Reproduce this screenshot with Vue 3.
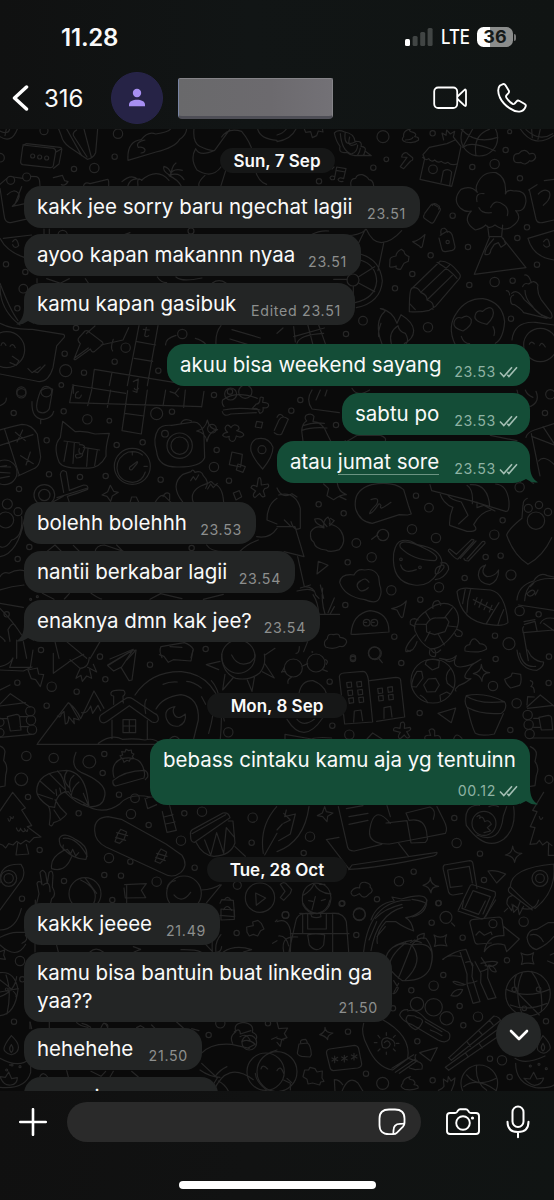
<script setup>
// each group is one day, every block is a run of messages from the same person
const days = [
    {
        label: 'Sun, 7 Sep', pill: 115, top: 18.5, bottom: 12.7,
        blocks: [
            { from: 'them', messages: [
                { text: 'kakk jee sorry baru ngechat lagii', time: '23.51', width: 396 },
                { text: 'ayoo kapan makannn nyaa', time: '23.51', width: 337 },
                { text: 'kamu kapan gasibuk', time: '23.51', width: 331, edited: true },
            ]},
            { from: 'me', messages: [
                { text: 'akuu bisa weekend sayang', time: '23.53', width: 363 },
                { text: 'sabtu po', time: '23.53', width: 188 },
                { text: 'atau ', link: 'jumat sore', time: '23.53', width: 253 },
            ]},
            { from: 'them', messages: [
                { text: 'bolehh bolehhh', time: '23.53', width: 232 },
                { text: 'nantii berkabar lagii', time: '23.54', width: 271 },
                { text: 'enaknya dmn kak jee?', time: '23.54', width: 296 },
            ]},
        ],
    },
    {
        label: 'Mon, 8 Sep', pill: 140, top: 51.3, bottom: 20.5,
        blocks: [
            { from: 'me', messages: [
                { text: 'bebass cintaku kamu aja yg tentuinn', time: '00.12', width: 380, shape: 'below' },
            ]},
        ],
    },
    {
        label: 'Tue, 28 Oct', pill: 140, top: 51.3, bottom: 20.8,
        blocks: [
            { from: 'them', open: true, messages: [
                { text: 'kakkk jeeee', time: '21.49', width: 196 },
                { text: 'kamu bisa bantuin buat linkedin ga', more: 'yaa??', time: '21.50', width: 368, shape: 'multi' },
                { text: 'hehehehe', time: '21.50', width: 178 },
                { text: 'sama i', time: '21.50', width: 194 },
            ]},
        ],
    },
]

// wallpaper doodles: c = circles (x, y, r), p = outlines
const doodles = [
    { x: 0, y: 125, c: [[354,26,14],[283,129,14],[222,132,8],[344,95,8],[0,98,13],[98,93,6],[119,96,6],[140,99,6],[132,17,12],[18,418,8],[70,491,13],[76,441,8],[188,330,14],[573,318,9],[377,668,14],[344,710,8],[194,686,8],[252,743,8],[197,737,18],[475,737,8],[228,609,8],[64,800,14],[139,800,16],[184,780,7],[20,674,54],[547,627,14],[32,166,12],[80,156,12],[690,800,8],[52,550,8]], p: [
        'M68 60l92 10q8 2 7 10l-7 42q-2 7-10 6l-82-9q-7-2-6-9l6-44q2-7 8-6M70 60l10-4 100 11q7 2 5 9l-8 41-16 13M167 82l17-10',
        'M0 35q35 22 52-23M0 18q25 12 29-6M15 32l4-20',
        'M176 12l8 20q4 20 24 34l54 37q18-4 25-20l6-71M200 12l45 80M230 15q-14 8-9 18l40 63M252 12l22 84',
        'M384 106q-4-57 40-62 20-26 43-17 38-5 45-15M384 106l84-25q57-14 71-38 19-12 21-31M435 45q-30 6-20 22 15-2 20 7 1 9-12 10',
        'M366 170q28-26 49-6M383 184q8-28 38-21M414 181q-4-28 12-15M424 166q48-40 83 0M552 164q-15-24-43-13 10-23 38-15M512 154q3-31 16-40M508 150q-22-13-16-26 16 5 20 19M544 184q-10-20-37-32',
        'M582 12q-4 40 17 52 30 15 45 12-46 20-57-5-18 31 4 64 45 28 72-9M644 76l45-62M665 36q20-30 60-17 26 31 34 65M615 151q-22 20-18 32M678 134l-15 48M773 12q8 30 58 34M765 133q10 38 35 45',
        'M0 178l20-17M40 156l28 4M92 154l17 1q9 2 10 15l1 14M0 190l12 79q2 26 20 24l54-12M22 209q20-20 34-4 7 17-19 39l38-8M65 185l-22 57',
        'M160 158l27-7 7 16 10 3q-8 14-20 9M250 184q4-15 20-8l53-13q4 0 3 21M0 340q20 40 73 57M10 340l85-10M38 350q12-18 18 12-12 12-18-3M148 312v20M132 312v20M365 332l25-9M518 334q30-11 57 0M472 456q12 18 28 17M528 456q16 16 78 3M637 474q20-14 41 0M111 473v-12M140 461l42 14M208 461l-27 14M256 461l9 13',
        'M0 485q0 70 60 115M0 475q30 80 54 112M0 595q38 20 97 18l93 15q6 4 2 10l-22 25-11 65q-15 50-51 40L0 747M37 694l20 13-8 14-19-8M3 661q5-16 15 0M30 664q8-12 16 4M84 731l12 12 25-17M101 739l12 4 22-23',
        'M223 700l18-44q-11-11-4-18l18-20q8-4 15 5l37 28q5 7-3 11l-21 18q-7 4-12-8l-45 32q-6 0-3-4M285 603l-26 23M303 660l66-15 17-37M340 643q-10 26-2 35M223 700l42-31',
        'M417 602l-35 180M474 602l-32 180M411 650l56 10M403 700l55 9M283 733l280 46M336 742l-8 40M283 733l-8 60M217 780l160 25M220 780v25M400 770l15-8-4 40-12-4M430 613l18 2M439 607l-5 25q4 6 12 0',
        'M497 660q-2-19 31-29M586 640q20 5 32 18M648 658q-2-36 15-56M696 614l85 25M690 642l52 16',
    ]},
    { x: 277, y: 125, c: [[318,35,18],[289,128,8],[328,103,7],[467,25,8],[686,75,8],[653,117,14],[586,126,8],[729,160,8],[468,133,13],[527,272,8],[126,169,8],[750,307,8],[721,339,8],[573,366,8],[461,391,8],[406,447,8],[354,490,8],[577,480,8],[653,471,14],[707,467,8],[780,419,8],[453,607,14],[258,587,13],[207,627,8],[702,581,8],[228,465,18],[512,351,5],[607,38,55],[790,660,50],[698,20,6]], p: [
        'M587 12l-30 55M552 12q45 48 110 25M597 92q-10-62 40-79M560 66q24-20 95 12M730 12q40 60 99 20M747 14q40 38 80 12M764 12l2 26M790 12l-7 31',
        'M172 24q10-12 31-3 28 4 31 28 23-2 18 15 17 2 12 14l19 14-27-1-22 1q-15-1-25-10-25 5-20-18-12-15-17-40M190 26q4 50 32 61M205 21q-8 50 34 28M218 36q-10 36 21 20M225 86q16-4 17-26M242 90q7-10 8-21M260 91l4-13',
        'M400 12q-7 8 9 10 12 4 4 13 15 1 11 11-12 10-38 5-16-6-6-16-3-18 20-23M385 45q20 0 23-8',
        'M0 50q42-7 57-38M0 30q18-4 28-18M82 12l4 10 15-2 5 18 13-6 5-14 14 3-2-11M165 132l6-6M173 155q-11-5-14 3 2 9 13 5l7-37 28 5-7 30q-13-6-17 3 3 8 15 5M177 136l28 5',
        'M222 183q-4-23 14-23 4-13 20-11 15 5 20 15 12 1 14 18M376 89q11-12 18-1l13 10q2 9-6 10l-21 23-10-6 20-28-16-1z',
        'M500 45l-5-21 12 7 2-16 11 12 13-8-4 17 23 28-12 58-16 62-95-21 14-62-5-12 19-22 53-11 24-11M437 97q10 11 18 4 8 12 18 4 10 11 20 4 10 10 20 3 10 11 27 5M492 172l7-34q16-9 25 3l-6 41',
        'M595 315q20-4 31-15 10 14 28 0 31 23 54 2 30-22 8-45 26 6 31-28 0-34-36-31-20-6-26 9 6-48-28-64-42-5-58 38-4 12 2 21-19-22-49-9-27 31-2 56 15 14 33 9-29 31 12 57M600 230q-6-28 21-24M606 248q8 18 37 15M641 247q13-28 40-7 16 11 10 32M632 303l4 31 38 1 3-35M638 335l-46 113 155-20-72-91M650 342q-28 30-26 46 16 5 18-14l10-16 12-5 8 14 14-10-7-17',
        'M710 98q1-13 15-12 18-20 32 1 18-7 19 11-8 14-18 9-12 17-27 5-23 5-21-14M755 195l25-16M802 167l29-4M757 194l20 88q4 15 23 10l31-7M784 207q19-19 33-6 8 18-18 40M753 340q15 56 78 65M753 340l78-23M800 350q14-20 18 12-11 10-18-2',
        'M443 265l18-24q5-6 12-1l12 7q9 4 3 12l-16 30q-5 9-13 3l-14-10q-9-5-3-13M466 242q3-11 16-2 10 4 3 12M407 350q16-1 37-22l-8 36q-3 8-8 0zM490 331l20-12q14 0 17 16l7 30q0 8-8 11l-20 4q-10 1-12-9l-8-32M493 330q-6-22 10-20 8 5 8 12',
        'M339 404q0-8 18-11 1-12 16-20l8 6q0 10 15 16l-2 14-13 6-10 18q-18 0-13-10-14 6-20 2z',
        'M397 560q0-62 6-68l87-84q30 1 55 35 9 9 2 18l-70 82-20 13q-30 7-60 4M403 490q18-7 28 12 21 8 19 23 24 6 18 28M431 502l88-83M450 525l76-74M480 412q40 24 60 48M397 535l18 19',
        'M180 330q60 8 88-17 18 40 45 40 30-1 61-36M265 313l-22 45M320 355l-17 82M250 387q60 17 66 81-5 65-78 80M250 405q48 15 49 64-5 51-65 64M170 463h40M245 455l48-30M246 475l47 25M229 484v48M100 330q30-15 55-12',
        'M315 657q-26-66 9-98-2-9-14-8 37 7 50 44l12-26q37 22 38 48 0 23-28 39M343 656q-10-34 20-54 3 18 22 23 12 20 3 30M312 595q-10 28-7 40',
        'M534 657q-25-53 6-95 28-42 78-41 58 10 65 69-4 52-28 65M558 618q-31-9-27-25 4-20 23-14 19-13 29 5 3 18-25 34M630 598q-40-9-36-25 4-20 23-14 19-18 30-6 9 21-17 45M553 634q7 22 25 22M648 605q8 14 3 27',
        'M743 450q12-3 20 23M737 485q5-13 18-8 17-16 28 3-4 20 9 43l30 39q8 18-3 18-40-12-54-38-21-21-21-46M698 510q-1-13-10-13M704 505q17-16 38 19l52 47M701 520q-2 21 12 19 20 12 27 24l70 17M703 535q-7-21 7-25M705 645q6-57 71-53l55 8M757 658q6-13 15-1M788 662q6-16 17 4',
        'M50 605l5 46M92 598l15 58M125 600l20 56M50 635l92-26M0 625l18-16M60 655q7-26 80-30',
    ]},
    { x: 0, y: 390, c: [[64,10,14],[41,69,8],[191,64,8],[262,88,14],[328,92,7],[470,71,18],[516,65,8],[642,15,8],[636,116,13],[428,157,8],[350,165,8],[140,151,8],[650,180,8],[642,231,14],[687,272,8],[482,269,8],[317,258,8],[240,261,8],[147,253,8],[57,297,8],[786,179,12],[397,229,54],[539,167,38],[539,167,26],[495,131,10],[133,315,31],[133,315,17],[14,247,37],[22,342,15],[54,365,12],[17,390,24],[53,507,8],[88,471,8],[20,673,8],[92,628,3],[112,620,3],[123,780,8],[300,800,8],[617,777,8],[692,12,18],[736,5,20],[575,474,8],[715,800,50]], p: [
        'M0 47q20-7 19-23M122 2q-20 50-7 63 21 10 33-9l10-58q-16-11-36 4M96 35q-2 53 35 53 26-5 30-24M122 88v13',
        'M210 38l395 12M218-10l-9 48M275 0l-12 47M332 0l-10 52M442 0l-18 132-58-10 17-120M497 0l-8 48M556 0l-5 52M612 4l-7 47M374 70l58 8M235 5q-11 2-8 18 15 5 17-8M415-5q-7 10-12 0M510 5l15 5 12-15M525 10l10 10',
        'M0 120q40-12 66-17 30 0 46 30l10 68q-4 28-18 34l-50 23M0 166l46-15 53-17M14 118l44 138M0 230l20-3M46 127l30 25M68 120l-17 36M62 197l38 24M91 186l-13 39M0 230l32 1M0 247l30 2M-2 265l30-6',
        'M188 94l38 31q32-3 59 7l43-2q-12 41-10 69-20 38-57 35-70 4-83-16-21-50 3-75zM192 153l47 6M250 172l49 8M202 158l-10 56M223 160l-4 60M264 177l-4 52M292 180l-8 46M239 164q20 0 14 14l-6 14q-14 0-9-16M239 192q-20 1-9 12 13 0 18-9',
        'M436 246q-10 31-38 31-44-3-47-43 0-34 34-48 26-5 42 9M389 232l22-17q4 1-1 7l-14 17q-10 2-7-7M397 185v10M442 229h-10',
        'M475 118q10-14 40-12l66-10q24 0 31 40l2 67q-12 28-78 28-62 2-66-46-13-40 5-67M543 99q9-17 32-6M622 90q7 29 31 29-26 5-32 36-4-27-31-32 27-6 32-33',
        'M672 50q-8-9-4-20 40-29 104-5M670 60q44-10 110 0M667 65q4 17 25 7l77-4M769 42q10 0 11-14-1-10 10-5l-2 14q18 0 18 9-2 10-17 7 3 15-9 17l-9-14-14-1zM677 110q6-11 16 3 8-14 22-4 6 9-5 13 23 5 21 14-8 9-22 2-4 20-16 15-8-4-5-14-12 6-20-3 3-8 15-9-11-9-6-17M770 94l18 3-4 17-18-3zM696 186l31 7-5 38-34-7zM714 222l22 8-7 17-20-7zM700 309l18-7 7 18-17 10z',
        'M788 237q-27-29-35-54-4-26 15-36 38-9 51 25 0 28-31 65M775 265q6-6 8 6l1 14 20-3q7 10-10 14l-4 7 5 15q-8 8-16-8l-14 13q-11-6 2-20l-14-10q4-12 18-3zM331 286l10 18 14 3-18 11-5 16-11-15-15-4 17-10z',
        'M191 307l-10-54q4-18 18-7l9 55 43-16q16 0 12 13-30 12-61 21l6 18M171 323l92-29M160 335l30-16M390 338l5-17 14 0 8 17M465 338q15-27 27-21l22 21M489 320q8-17 20-8v17',
        'M548 336q-40-51 1-83l24-8q5-10 12 2 20-7 25 10 20 20 7 38M580 337q-13-32 27-51l21-8q4-8 13 4 27 5 30 55M572 272l8-12 7 10 9-15M623 297l9-15 8 11 12-13',
        'M0 470q17 8 35-20 35-10 30-70M0 500q54-10 73-112M0 560q10-17 27-10 25-14 49-7M0 600q35-12 72-15M0 640l70 12M0 655q40 40 65 80M30 754l-6-35q14-26 22-12M50 750v55M70 755l10 50M0 739q20 16 14 15',
        'M775 450q-36 13-57 36M831 325q-30 20-30 65l30 12M770 440q40 7 61-25M140 485l25-20 20 20M220 466l20 20M285 486q3-20 28-21l60 20M620 465q12 20 52 20M127 610l35 18M193 627l15-16M273 610q27 18 32 17M450 628l32-17 64 15M610 628l60-15M350 465l20 20',
        'M165 755l12 50M200 755l60 50M300 755l-29 50M408 780l-28 30M400 778l-70 29M483 770l70-12q20 7 27 20l-7 25M483 770q-7 13 3 33M510 770l36 2',
    ]},
    { x: 277, y: 390, c: [[70,30,8],[43,62,8],[177,105,8],[456,353,13],[417,317,8],[200,370,8],[125,343,8],[405,418,14],[318,435,17],[238,459,13],[477,444,14],[284,502,14],[343,601,14],[212,517,8],[652,434,14],[677,391,8],[671,497,8],[626,501,8],[702,555,15],[563,564,8],[486,592,14],[430,629,8],[205,645,8],[728,663,14],[785,673,8],[352,740,8],[292,789,18],[654,737,8],[696,761,18],[228,803,8],[816,800,8],[754,355,12],[786,345,11],[813,366,11],[777,392,26],[728,292,14],[820,13,14],[804,69,8],[269,698,10],[292,698,10],[372,508,4],[429,532,4]], p: [
        'M105 0q-20 30 0 57l82 11M130 0l-13 30M150 0l-6 18M225-5q15 28 53 5M720 0q10 47 42 49 28-15 15-45M745 0q5 15 23 22',
        'M78 153l-4-31q2-23 15-29-8-8-2-17 17-9 24 3l-3 16q28 1 41 34l12 24M78 107q30-11 64-7M75 121q30-11 75-7M-8 121l14-31q10-17 28-2l-20 44q-9 6-22-4M0 82q8-17 20-1M205 152q-7 10 16-4l20-12 70 0q18 7 14 16M640 136l80 16',
        'M747 142q4-15 25-22l59-19M763 131l26 127M831 165l-67-26M770 280q-12-5-10-17M798 110l33 50M785 213q15-20 46 10',
        'M0 294q15 35 45 17l15 10M5 315q50-13 65 40v60q-20 10-28-20M0 410h54l27 90-60-15M22 390l20 20M62 500l20 90q30 0 34 25l10 10M140 282l15 14-5 21 20 12q20-15 38-15-24-10-27-34M188 320l19 9',
        'M284 284q65-12 96 15l15 50 8 23-11 3-25-1-81 26q-37-4-50-43-10-57 48-73M282 329q28-10 17 14-21 20-21 28 10-3 24-24 4-10 10-1-9 20 30-9',
        'M101 426q13-23 40-12-4-23 12-33 10 14 4 21 23 4 34 20 20 32-4 57-28 10-40 1-32-1-37-24-12-7-9-30M140 410q-26-8-27-23 18-5 25 9l12 14M158 407l14-15-12-7M284 448l17-13M305 424q-10 14 0 17M120 552l4-38 29 12z',
        'M350 490q7-35 25-38 20-5 46 12 72 12 74 55l-13 30q-26 42-70 36-70-8-62-95M374 458q18-9 74 20 45 22 26 34-67-1-104-40-4-10 4-14M490 519q25-5 25 19-14 29-40 31M485 530q20-11 15 4-15 21-25 17-2-17 10-21M371 525q9 29 47 14',
        'M459 284l5 18 116 30 106 32q12 3 10-30-6-50-40-52M488 307q9 34 40 45-12 26-10 54l52 18q40 2 20-20 20-38 52-44M570 286q20 13 16 55M580 284q53-3 58 64M513 316q9 13 40 20l20 40-28 26M600 336l0 17 20-7 34 17',
        'M514 483q1-9 8-3l16 13 46-45q12 0 4 8l-45 51q-7 3-29-24M570 507l46-52q9-3 8 5l-50 53q-13 0-13-8M550 505l47-52M738 345l-3 40q-40 32-46 50 20 59 64 88 45-25 71-80M739 345q-2-13 12-20',
        'M188 577q4-27 43-22 10-20 32-15 30-7 42 20l3 25q9 20-1 40-9 19-44 4-62-10-75-52M276 577q-9-17-24-5-22 12-2 30 14 3 24-9M626 525q-18 24 4 35 24 0 35-20 0 34-27 44-32-4-34-29 1-25 22-30',
        'M540 605q8-12 36-10l65 5q44 9 52 98-14 12-52 6-90-7-101-99M565 597q-4 20-8 44M581 597q-11 35-11 70M666 638q-20 32-38 63M680 659q-12 25-17 45M589 629l58 30M600 623l-7 21M615 628l-9 24M631 637l-10 22M645 646l-8 20',
        'M344 656q30-5 44-23l-10 48q-4 5-10-5l-8-16zM222 732q4-60 57-70 57 5 57 64l-100 7q-14 1-14-1M262 697h7M285 697h7',
        'M414 722q-8-30 35-60 45-34 76-15 30 25 14 70-37 59-78 60-30-14-47-55M448 703q12-20 29-19l30-1 9 13-12 29-31 9-24-8zM448 703l-34-1M459 725l-15 28M484 733l18 32M515 708l26 3M503 683l23-29M460 690l-14-23M468 655q-4-24 16-23 10 12 7 14M414 710l-14-7q-3-17 13-17l11 4M420 755q-10 33-33 30-6-14 28-50M459 778q-7 23 15 22 6-13-3-24M540 718q23 7 13 20-17 5-19-7',
        'M720 630q3-43 50-57 18-28 41-16l20 4M725 645l106 16M743 632q4-72 88-66M750 611q20-20 24-2-17 18-24 2M740 710q-6 6 0 20l14 82M742 703l32-9 6 27M738 728l93-8M741 695l33-6M800 700l31 22M790 700q10-20 41-15M760 590l10-10M775 615l8-15',
        'M130 585l10 40M108 614q16 24 17 58M137 594q-5 40 7 78M172 624l-19 44M172 650l-13 23M115 673h73M70 594l30-9M60 603q38-10 50 0M57 790q10 0 10-20M146 771q-10-15 5-25 1-17 18-12 18-6 20 8 20 2 20 14-7 18-20 13-20 11-43 2M564 783q-4-17 14-19 5-20 17-17 10 8 13 14 20 1 21 16-20 14-65 6M80 785l12-30',
    ]},
    { x: 0, y: 650, c: [[155,110,14],[52,98,8],[230,125,8],[140,167,8],[316,88,8],[450,44,8],[79,318,14],[161,324,14],[268,335,19],[313,312,8],[308,369,8],[64,388,19],[84,441,8],[357,434,8],[236,490,8],[393,492,14],[446,525,8],[405,445,13],[543,572,14],[553,490,8],[606,485,14],[758,503,14],[755,578,8],[584,653,8],[327,624,14],[391,635,8],[119,600,8],[192,693,8],[363,677,8],[313,675,8],[337,750,8],[470,695,14],[66,746,8],[26,685,24],[26,685,14],[91,184,14],[93,211,14],[96,239,14],[685,247,14],[780,743,44],[255,731,48],[712,706,12],[552,730,52],[0,217,12],[0,248,12]], p: [
        'M0 50q30-7 39-26l-10 28 62 0 8-52M0 60l70 3 26-12M84 60l28-6 4 18 15 2-10 36-14-21-13-3zM160 10v60l46-33M206 36l45-23M210 29l30 26q26 0 28-33M240 57q-10 20-12 28l15-9 4 18 13-16 15 7-6-26M263 52l27 14-10-23',
        'M323 45l75-45 10 2-12 88-9 2-24-40-22 11-18-16 75-46-35 53M478 14l14 5 13 18 15-8 53 4 6-33M665 12q0 55 42 73 42 8 72-16 20-24 14-57M695 15q18 38 55 23 20-16 14-25M660 34l-41 10 37 15M675 73l-7 47 31-36M742 90l14 34 8-46M787 65l36 19-28-42M795 15l30-20',
        'M0 120l30-15M0 162l31-31 59 40M0 168l76-10M0 262l95-9M22 200l28-7q8 0 9 9l4 38-32 3zM0 206h22M60 200h22M60 230h24',
        'M111 283h355M113 280l92-122q25 18 37 48l40-83 30 52M172 198q10 7 12-6l8-8 4 38q11-2 10-22l17 21-2-16 17 5-29-50M245 188q15 5 27-20l6 22 16-24 8 16M295 280q40-30 72-12 40-3 68 2 26-8 50 13M304 194q-9 8-3 20 9 9 21 0l66-47 68 49q15 5 19-7 0-15-10-18l-66-44q-13-8-24 0zM336 210v56M442 212v54M369 209h38v39h-38zM388 209v39M369 228h38M341 163v-25q-10 0-8-10 5-10 38-7 9 9-2 18l1 20',
        'M405 135q48-72 140-70 108 10 128 148M468 177q20-36 75-43 56 9 52 76l-14 57M634 92q40 42 27 175M525 170q-36 6-25 38 10 25 37 20 23-10 19-36-24 21-34 0-6-13 3-22M489 103q20-9 43-7M560 94q20 0 44 20M640 158q4 30-14 92M605 140l12 23M437 190q-6-32 2-42M510 266q17-15 28 2',
        'M0 288q14 5 15 17l-4 27q15 15 6 43l-2 33-15 3M228 307q-19 43 15 60 84 34 70 75-5 31-50 28-35-9-69-45M250 463q60 36 110-2 30-33 90-20',
        'M110 425q0-60 90-64 50 5 62 75l5 32q-30-20-50-26l-12-17q-35 0-41 47l-18-3q-35-24-36-44M147 370l48 48M172 363q20 13 26 65M202 363q-20 25 6 50M222 376q-20 15-10 49M237 396q-20 15-23 40M120 393l43 38M113 432l45 15M168 418l2 18M179 414l4 16M250 430l15 35M145 468q10 15 3 56 8 9 13-6 26-8 39-26-21-18-35-43M162 480l20 30',
        'M342 382q-12-40 22-56 65-14 70 48l-2 10-85 24q-10-2-8-16 35-30 95-31 12 6 9 20l-7 8M365 325l-5-8 8-2-3-10 10 1 3-8 8 4 8-2 1 9 7 3-5 7 4 7-10 1-3 7-7-3-9 6-3-8z',
        'M38 427l-39 57M38 427l38 47-11 6 30 47-13 3 41 31-21 2-14 14-10-6-16 11-12-8-11 11-13-4-9 13-8-8-20-8M24 506q4 16 8 0M30 500q10 10 10 0M49 534q7 17 12 4M61 535q9 17 15 5M73 536q9 15 10 3M53 579l-5 36 38-3-7-29',
        'M284 542q-2-39 40-42l40 8 134 74 48 34q20 29-4 52-24 19-53 2L318 591q-33-17-34-49M353 552l9-14 18 8-8 22-13 12-14-5zM347 562l30 9M350 548l33 9M474 611l9-14 17 9-8 22-12 12-15-6zM467 622l29 10M470 610l31 9M435 445l8 31 27-12M440 445q15-10 48 5M487 485l14 62 28-6-20-74M492 501l27-7M497 522l28-6',
        'M572 557q-4-15 11-21l86-47q17-3 21 14L584 577q-13 1-12-20M576 551l101-57M588 577q20 40 54 42 50-2 63-40l-6-66-14 0M614 570l18 46 18-68 21 62 8-77 25 30M705 590l31 29M790 610q-13-80 40-140M831 550l-37 65',
        'M178 566q10-23 50 3 42 22 30 59-37 1-70-34-11-9-10-28M190 565q40-5 72 54M190 585q-5 23 12 13l10 13 6-13 9 20 9-10M190 602q-41 22-35 54 41 14 60-36M0 698q-4-59 63-55 15 20 4 45L0 780M110 760l7-28-6-32q3-8 12-4l3 8-6-36q8-15 17 2l5 30 5-32q10-12 12 8l-2 35q14 24-2 35l-5 22M130 705q20-18 20 20M242 690q60 28 38 73M255 684l35 46M374 704l65-3-15 20 13 22-61 1-4-30M380 760v-53M501 715q4-20 25-23M605 720q34-2 55-16M664 705l-44 53M660 760l5-11 35 2 4 49-44-4M673 750q9-16 20 0M767 729l30 15-28 22zM522 735q24 28 50-8',
    ]},
    { x: 277, y: 650, c: [[49,54,27],[117,39,27],[228,27,8],[158,95,8],[294,10,19],[373,39,8],[656,27,8],[648,108,14],[719,160,14],[815,99,8],[428,189,8],[166,227,8],[217,254,14],[700,240,8],[468,93,66],[752,195,14],[755,224,14],[758,252,14],[532,504,8],[539,579,14],[99,560,14],[80,609,8],[609,611,8],[410,665,8],[366,694,14],[621,690,8],[300,748,8],[196,760,8],[247,792,18],[484,760,8],[789,685,24],[789,685,13],[621,520,36],[25,795,10],[106,6,1],[816,388,12]], p: [
        'M75 49l17-8M22 53l-8 14M14 65h12M43 82q-13 6-10 18M137 59l14 5M145 29q11 4 3 14M307 27l9 11M390 0q10 7 12 0M463 0q10 18 28 0',
        'M448 32q17-7 39 0l-2 20-19 8-21-17zM440 105l14-18 22-2 11 20-12 20-25 1zM404 110q0-22 16-46l14 0 4 20-20 27zM521 55q-20 20-10 45l19 15M430 136q13 6 22 22M491 152l-2-16 20-10 12 7M488 25q33 10 50-8-16 32 12 34 33-2 62-23-31 17-35 28-29 34 5 30-20 15-37 21-15 12-8 16M500 28q20 15 36-3',
        'M203 222l-16-142q1-10 14-11l57-5q12 0 16 24l13 128-84 6M278 92l78-10q16 0 15 10l12 109-84 13M209 98l14-2 1 15-13 2zM239 96l14-2 1 15-13 2zM212 122l14-2 1 15-13 2zM242 120l14-2 1 15-13 2zM215 145l14-2 1 15-13 2zM245 143l14-2 1 15-13 2zM302 116l14-2 1 15-13 2zM332 112l14-2 1 15-13 2zM304 138l14-2 1 15-13 2zM334 135l14-2 1 15-13 2zM230 216l2-33 20-3 5 32M321 205v-32l20-4 4 32',
        'M66 130q7-39 42-38 33 13 40 38M30 208q50 80 107-4M60 208q20 24 52 0M483 190l53-16-13 44zM613 43q2 24 25 25-23 0-23 26-5-20-26-23 25-7 24-28M683 88l19-9 4-10 25 4q4 24-3 33l-27 8q-14-11-18-26M760 92q14 4 2 18 10-1 10 17M720 0q7 60 60 61 20-10 20-25-20 0-38-18l-10-18M728 9q10 45 48 40',
        'M568 137q55-12 114 18 9 10 0 27l-9 8q-62 5-103-18-10-17-2-35M568 138q37 26 114 17M572 175q11 51 23 75 16 10 57 2l27-61M750 171l40-36 41 33M752 175l77-9M765 264h66M786 202l28-6q10 1 10 10l3 33-34 1zM770 205h15M770 232h20M750 165l2-25 20 1',
        'M371 219q10-7 12 4l-1 12 17-3q7 8-10 13l9 15q-7 10-16-5l-13 12q-10-6 1-20l-20-5q-3-14 19-7zM444 267q-4-13 17-11l-5-15q10-9 17 1v16q15-5 18 7M270 267l17-18 28 18M24 267l0-14 80 14q18-7 60-3M530 267q7-23 25-2M760 290q20 9 18 25l-4 20q15 18 4 42l-4 30-14 2',
        'M96 470q-14 105-96 135M28 480l-5 20 32-8-15 60-35 20M20 490l20 20-20 10M0 540l16-18M143 470l5 15 20 4-16 10-2 16-13-15-16-3 15-8z',
        'M184 470l28 122q4 12 20 11l82-20M208 476l50-9M216 500l57-10M216 523l57-12M330 467l10 33M340 520q-50-60-62 20-6 44 60 42l80-15 87-17q9-14-5-40l-20-40M327 519l63-7 12 67 43-2q10-10 5-20-3-56-54-46l-9-22 72-18q20 8 10 37M148 569l38-7M149 570l68 88q90-4 243-38 22-3 20-13l-255 38-10 14M365 580l30 39',
        'M568 526q-10-63 40-60M600 555q70 30 79-57l10-28M710 470q9 65-30 98-55 38-112-42M600 500q12-10 8 5 10-10 15 10 13-8 20 8l-12 10 10 10-20 5M636 470q15-7 28 0M707 588q2 23 28 22-20 8-22 27-4-20-28-22 20-3 22-27M800 427l-33 54 13 4-20 45 14 3-15 50 20-2 8-10 10 14 13-10 15 12M815 580l-1 36h17M787 500q4 15 10 3M460 683q2 24 25 26-23 0-23 20-5-20-24-23 23-7 22-23',
        'M633 663q20-5 53 9l-27 27zM502 645l76-13q9 0 10 10l12 73M502 645q-5 4-3 14l16 68q4 9 14 8l28-5M512 660l65-11 9 50M512 661l8 51 35-4M590 705q-8-4-12 5l-34 70M590 705l63 20q3 0 2 12l-29 63M588 722l52 18-22 52M588 722l-24 51',
        'M700 710q0-56 130-68M830 642q10 80-55 133-10 1-75-65M700 710q-12 10 0 20l66 50M706 737q-18 3-16 25l14 20 5-17 13 10 8-21M223 725q10-15 25-11-2-19 17-17 19 5 14 14 15 12-4 22-14 18-28-2-20 15-25-3M10 703q13-10 20 1l14 15-4 11-20 21-10-8 14-19z',
        'M78 765q-10-50 30-65 50-5 54 44-3 43-43 47-28 0-41-26M80 735q26-16 31-35 12 30 51 32M127 703l17 0M95 752l12 2M133 752l12-4M115 740l-10 40M68 790l40 2M165 790h20M282 810q17-50 70-57l-7-12 29 6q69-20 75 3 2 40-44 51M295 805q26-29 80-42M405 748q40 6 44 15M682 785l10-10',
    ]},
    { x: 0, y: 900, c: [[60,183,14],[42,365,8],[20,268,4],[710,99,8],[626,405,8],[661,370,14],[20,510,3],[36,495,3],[60,500,3],[804,370,8],[797,515,56],[67,238,8],[748,428,22],[30,495,1]], p: [
        'M0 90q48 0 64-64M0 112q30-15 50-15l27 0M0 135q50 46 77-2M76 105q12 14-10 25M0 155l14-5-3 15 5 13-16-2M0 218q44-5 54 50-8 74-54 79M0 240q54 40 48 50M0 290q45-16 50-60M18 225q18 50 3 117M0 276l55-10M34 407q-30 38-19 47 20 20 36 1 14-20-17-48M34 434q-10 13 0 24 10-10 0-24M0 475q58 32 91 0M0 562q78 7 92-45l0-27M0 530l16 2 10-16 9 20 17-3q0 20-20 22-21 3-32-25',
        'M106 0v12M105 132v24M170 136l5 20M270 156q17-17 40 0M400 140l22 8-20 8M603 156q-17-8-60-7M617 133l20 21q-2-40 4-53M648 156q-4-30 15-52M665 140q-2 16-13 16M663 60v-33l40 3v28zM671 29q10-20 24 2M740 81l20-4-2-11 16-5 10 9 8 17-10 5-9 16-13-5-12 5-7-12zM670 156q35-23 85-7l-25 7M826 65l5-5M818 130l13-8M90 366l5 20M230 368q10 10 34 14M246 370q15 3 26 12M310 370q18 0 12 15M410 383l12-6 10 6M530 366l20 18',
        'M90 386v-20M148 366v20M303 383q10-26 20 0M465 385l-10-10M603 461q30-33 92-28l53 12M575 386l22 6M600 510q28 20 60 22M645 530q14-20 36-30M605 490l47 44-25 40M640 575q40-95 120-36M655 543q20 10 30 30M698 430q-11-22 10-35-10-24 22-28 34 4 27 30 17 7 12 20M703 395q18-13 18 7l32-10M720 410q20-12 30 10M726 425q20-10 40 8l-20 10M831 450l-20 7M815 418l16-7M783 507q5-17 20 0M766 520q2 27 34 50M119 531q10-20 24 0M200 512l5 19M273 514l30 15 14-15M340 514l-10 17M395 514l20 17',
    ]},
    { x: 277, y: 900, c: [[194,11,8],[247,44,18],[238,105,8],[464,68,8],[557,113,8],[740,65,14],[690,181,8],[507,52,18],[499,225,8],[470,257,14],[403,271,8],[485,9,8],[548,318,8],[559,376,8],[603,350,14],[421,424,8],[213,395,8],[267,521,8],[317,550,18],[467,541,8],[639,476,8],[675,481,14],[698,531,8],[807,364,8],[648,71,12],[420,312,20],[470,322,26],[509,355,20],[753,281,67],[712,268,7],[785,268,7],[742,325,7],[607,550,55],[26,45,10],[348,325,8],[760,498,3],[786,493,3],[808,506,3],[0,515,60]], p: [
        'M78 10q14 30 44 30 30-7 37-40M100 38l4 12q14 6 28 0l-2-12M36 155l20-90q4-24 30-25h84q30-2 38 25l7 90M92 43v44h56v-44M77 43v58h90v-57M167 101v54M167 101h49M40 101h37M92 105q23-7 51 0l-3 30q-20 28-43 0zM0 65q31-12 40 25 3 18 0 65M5 108q23-2 30 30M20 155q-10-50 42-44',
        'M260 155q17-155 140-155M282 152q20-110 95-130M276 120l23-55M301 130q-6-30 26-65 20 0 30 0 20 15 53 28-7-32-24-40 53-8 64-53M300 109l25-29M524 69l9 9M543 33l68 23q10 3 15-9l30-47M560 0l-5 25 50 18 20-40M705 12l5 25 13-13 4 20 13-25M735 25q40 10 50-25',
        'M579 70q-2-11 12-12l76-7q10 3 9 14l4 25M579 70l14 54q3 10 12 8l38-3M597 105l10-11 15 12 20-10 3 8M622 155q7-50 59-48l-2-28 48 38-38 38-6-20q-40-12-61 20M750 113q5-27 30-25l33-20 18 0M750 112q3 30 28 37 34-15 53-40M760 105q24-8 39 20M471 105q20 13 38-1-9 18 1 34-20-6-38 1 8-17-1-34M732 159q20 12 38-1-8 18 1 34-20-6-38 1 8-17-1-34',
        'M404 135q21-26 43-20 31 40 12 90-18 40-83 37-44-30-50-63 4-45 78-58M404 135q-30-10-52 5M404 135q40 50-20 106M404 135q-23 60-40 100M386 129q-53 40-50 82M404 135q80-15 56 67M400 128l13-8 20 8M424 118q-12-12 18-18 0 8-3 16M350 242l14 22q-7 18-16 17M365 250l-14 27',
        'M497 178q37-26 70-30l20 52-2 30 24 75-21 5-18-58 0-30-22-70M552 170q-40-8-53 8M566 187q20-7 22 10M570 250q16 0 30-7M613 173l20 30-1 30 25 60-24 5-22-50 1-28-18-35M610 215q13-3 20-8M612 190q34-10 50-3-10 17-38 10M635 195q5 24 23 20-5-15-20-20M522 287q10-22 35-18-10 25-33 18M560 252q-40-14-30-4 14 12 35 5',
        'M260 370q-10 30 12 70 27 62 75 70l45-34q13-70-80-120M345 505l65-41M355 517l60-40M367 520l54-38M395 475l25 9q21 5 15 23l-20 2-18-5M420 484q-10-12-3-20M322 428q10-13 18 4-6 18-23 10-10-26 13-29 28 8 23 25M328 398v8M303 406l6 8M292 428h8M303 453l6-6M328 463v-7M355 453l-6-6M366 430h-8M355 406l-6 6',
        'M368 345q4-17 24-16M368 345q10 20 35 28l80 47q24 12 34-3 6-20-10-24l-60-35q-30-35-55-25M393 346l20 2 8 5q18 3 15 14-9 20-21 22-20-10-28-30 1-8 6-13M445 365l50 30M460 390q20 7 35 17',
        'M516 473l135-125q12 0 20 13l-148 120M505 502l154-111M515 511l145-99M515 473q5 4 8 8M505 502l10 9M570 425l10 14M605 392l12 13M638 361l10 13M565 459l9 12M606 430l10 14',
        'M428 458l53-15-20 40zM144 382q1 18 24 17-18 7-16 20-8-12-24-15 17-6 16-22M149 462q-3-12 9-15l75-11q10 1 12 10l9 45q1 10-12 13l-73 8q-8 0-10-10zM173 468v20M165 474l17 8M182 472l-17 11M202 466v20M194 471l17 9M211 469l-17 12M231 460v20M223 465l17 9M240 465l-17 12M66 432l25-3q10 4 12 35l-4 7-25-2q-12-3-13-10zM71 429q-4-11 15-11 4 5 5 10M83 510l12 0 4-8 15 4 6 10 16-3-1 21 6 10-10 2-3 9-21-6-14 3-3-14-12-8z',
        'M174 574l-2-35q15 0 25 15M195 574q20-50 48-25l15 25M400 530q-10 8 8 10 10 8 3 14 15 1 12 11-18 7-40 3-17-8-6-17 0-15 23-21M484 571q11-3 17-12l-2-22 13 9 2-16 8 13 12-9-3 19-8 20M569 525q30 40 89 10M599 496q-6 50 30 75M560 560q40-30 98 12',
        'M736 218q-28 60 2 130M718 225q-15 30 10 60l59 60M688 268q60 30 130 0M700 315q50 20 110-5M763 214q39 50 30 120M714 475q30 21 90-7M716 490q0 60 60 73 40 3 55-8M741 535l18 2 11-20 10 20 20-3q-5 20-27 22-15-2-32-21M798 407q-24 35-14 45 17 16 34-3 8-13-20-42M798 430q-10 15 0 23 10-8 0-23M0 366l5 20 27-2-10 17 8 12-16 6-4 20-10-12M0 415l20 5M0 512q10-19 20 8M20 540l20 10 0 20M30 535l14 13M820 165l11-5M812 183l19 8',
    ]},
]
</script>

<template>
    <div class="phone">
        <header class="top">
            <div class="status">
                <span class="clock">11.28</span>
                <svg class="signal" width="28" height="18" viewBox="0 0 28 18">
                    <rect x="0" y="11" width="5" height="7" rx="1.5" fill="#fff" />
                    <rect x="7.6" y="8" width="5" height="10" rx="1.5" fill="#414544" />
                    <rect x="15.2" y="4" width="5" height="14" rx="1.5" fill="#414544" />
                    <rect x="22.6" y="0" width="5" height="18" rx="1.5" fill="#414544" />
                </svg>
                <svg class="lte" width="32" height="26" viewBox="0 -3 32 26">
                    <text x="0" y="17" textLength="29" lengthAdjust="spacingAndGlyphs">LTE</text>
                </svg>
                <div class="battery"><span>36</span></div>
                <i class="nub"></i>
            </div>
            <div class="nav">
                <svg class="back" width="17" height="26" viewBox="0 0 17 26">
                    <path d="M14.5 2L2.5 13l12 11" fill="none" stroke="#fff" stroke-width="3.5" stroke-linecap="round" stroke-linejoin="round" />
                </svg>
                <span class="unread">316</span>
                <div class="avatar">
                    <svg width="18" height="20" viewBox="0 0 18 20" fill="#a78ff2">
                        <circle cx="9" cy="5" r="4.2" />
                        <path d="M1 18.2v-1.6c0-3.4 4-4.9 8-4.9s8 1.5 8 4.9v1.6z" />
                    </svg>
                </div>
                <div class="name"></div>
                <svg class="video" width="36" height="24" viewBox="0 0 36 24" fill="none" stroke="#fff" stroke-width="1.8" stroke-linejoin="round">
                    <rect x="1.2" y="1.5" width="23" height="20.5" rx="4" />
                    <path d="M24.5 10.500l6.500-6.200q2-1.800 2 .5v13.900q0 2.300-2 .5l-6.500-6.200" />
                </svg>
                <svg class="call" width="30" height="30" viewBox="0 0 30 30" fill="none" stroke="#fff" stroke-width="1.9" stroke-linejoin="round">
                    <path d="M3 2.500L6 1.200q1.500-.5 2.500 1l3.200 5.300q.8 1.400-.3 2.700l-2 2.200q-.7.9-.1 2 2.700 4.200 6.300 6.500 1.100.5 2-.3l2-2.300q1.100-1.100 2.500-.5l5.600 3.200q1.600 1 .9 2.600-1.600 4.400-6.100 5-4.500.4-9.600-3.200Q6 21 2.900 14.500C.7 9.200.6 5 3 2.500z" />
                </svg>
            </div>
        </header>

        <main class="chat">
            <svg class="wallpaper" width="554" height="962" viewBox="0 129 554 962">
                <g v-for="tile in doodles" :key="tile.x + '-' + tile.y" :transform="`translate(${tile.x} ${tile.y}) scale(.3333)`">
                    <circle v-for="(dot, i) in tile.c" :key="'c' + i" :cx="dot[0]" :cy="dot[1]" :r="dot[2]" />
                    <path v-for="(line, i) in tile.p" :key="'p' + i" :d="line" />
                </g>
            </svg>

            <div class="thread">
                <section v-for="day in days" :key="day.label">
                    <div class="day" :style="{ width: day.pill + 'px', marginTop: day.top + 'px', marginBottom: day.bottom + 'px' }">{{ day.label }}</div>
                    <div v-for="(block, b) in day.blocks" :key="b" class="block" :class="[block.from, { open: block.open }]">
                        <div v-for="msg in block.messages" :key="msg.text" class="bubble" :class="msg.shape" :style="{ width: msg.width + 'px' }">
                            <span class="text">{{ msg.text }}<u v-if="msg.link">{{ msg.link }}</u></span>
                            <span v-if="msg.more" class="text">{{ msg.more }}</span>
                            <span class="meta">
                                <span><template v-if="msg.edited">Edited </template>{{ msg.time }}</span>
                                <svg v-if="block.from == 'me'" width="19" height="12" viewBox="0 0 19 12">
                                    <path d="M1 6.500l3.800 4L13 1.300M8.300 8.800l1.600 1.700L18 1.300" />
                                </svg>
                            </span>
                            <svg class="tail" width="18" height="18" viewBox="0 0 18 18">
                                <path d="M8 0C8 9 5.500 14 0 17.200q6 1.300 12-3.200l6 3V0z" />
                            </svg>
                        </div>
                    </div>
                </section>
            </div>

            <button class="down">
                <svg width="20" height="12" viewBox="0 0 20 12"><path d="M2 2l8 8 8-8" fill="none" stroke="#fff" stroke-width="2.6" stroke-linecap="round" stroke-linejoin="round" /></svg>
            </button>
        </main>

        <footer class="composer">
            <div class="bar">
                <svg class="plus" width="28" height="28" viewBox="0 0 28 28"><path d="M14 1.200v25.600M1.200 14h25.600" stroke="#fff" stroke-width="2.6" stroke-linecap="round" /></svg>
                <div class="field">
                    <svg width="28" height="28" viewBox="0 0 28 28" fill="none" stroke="#fff" stroke-width="1.8" stroke-linejoin="round">
                        <path d="M15 26.200h-4Q1.500 26.200 1.500 17v-6.500q0-9 9.500-9h6q9.500 0 9.500 9V15q0 2-1.500 3.600l-6 6q-1.500 1.600-4 1.600zM15 26q.5-.6.500-3.500 0-6.600 6.500-6.600 3.500 0 4.300-.9" />
                    </svg>
                </div>
                <svg class="camera" width="34" height="28" viewBox="0 0 34 28" fill="none" stroke="#fff" stroke-width="1.9" stroke-linejoin="round">
                    <path d="M4 5h5q1.200 0 2-1l1-1.500q.8-1.200 2.200-1.200h5.600q1.400 0 2.200 1.200L23 4q.8 1 2 1h5q3 0 3 3v15.300q0 2.700-3 2.700H4q-3 0-3-2.700V8q0-3 3-3z" />
                    <circle cx="17" cy="15" r="6.8" />
                    <circle cx="26.5" cy="10" r="1.6" fill="#fff" stroke="none" />
                </svg>
                <svg class="mic" width="24" height="34" viewBox="0 0 24 34" fill="none" stroke="#fff" stroke-width="2" stroke-linecap="round">
                    <rect x="6.5" y="1.5" width="11" height="20.5" rx="5.5" />
                    <path d="M1.500 16.800q0 10.200 10.500 10.200t10.500-10.200M12 27v5.300" />
                </svg>
            </div>
            <div class="home"></div>
        </footer>
    </div>
</template>

<style>
body {
    margin: 0;
    background: #0a0a0a;
}
</style>

<style scoped>
.phone {
    display: flex;
    flex-direction: column;
    width: 554px;
    height: 1200px;
    overflow: hidden;
    background: #0a0a0a;
    color: #fafafa;
    font-family: Inter, "Liberation Sans", sans-serif;
}
.top {
    height: 129px;
    flex: none;
    background: linear-gradient(90deg, #101111, #111515 45%, #101413);
}
.status {
    display: flex;
    align-items: center;
    height: 60px;
    padding: 14px 0 0 61px;
    box-sizing: border-box;
}
.clock {
    width: 344px;
    font-size: 24px;
    font-weight: 600;
    letter-spacing: -0.2px;
}
.lte {
    margin-left: 8px;
}
.lte text {
    font-size: 19.5px;
    font-weight: 500;
    fill: #fff;
}
.battery {
    width: 36px;
    height: 20px;
    margin-left: 4px;
    border-radius: 6.5px;
    background: linear-gradient(90deg, #fff 13px, #8b8d8c 13px);
    color: #151918;
    font-size: 18px;
    font-weight: 700;
    line-height: 20px;
    text-align: center;
}
.nub {
    width: 2px;
    height: 7px;
    margin-left: 1px;
    border-radius: 0 3px 3px 0;
    background: #777;
}
.nav {
    display: flex;
    align-items: center;
    height: 52px;
    margin-top: 12px;
    padding-left: 12px;
}
.unread {
    width: 67px;
    margin-left: 15px;
    font-size: 24px;
}
.avatar {
    display: flex;
    align-items: center;
    justify-content: center;
    width: 50px;
    height: 50px;
    border: 1px solid #28254b;
    border-radius: 50%;
    background: #262346;
}
.name {
    width: 153px;
    height: 37px;
    margin-left: 15px;
    border: 1px solid #858488;
    border-left-color: #7884a3;
    border-bottom: 3px solid #4e4e56;
    border-radius: 2px 2px 4px 4px;
    background: linear-gradient(90deg, #69696b, #6c6a6e 60%, #737176);
}
.video {
    margin-left: 100px;
}
.call {
    margin-left: 27.5px;
}

.chat {
    position: relative;
    height: 962px;
    flex: none;
    overflow: hidden;
}
.wallpaper {
    position: absolute;
    top: 0;
    left: 0;
}
.wallpaper circle, .wallpaper path {
    fill: none;
    stroke: #262626;
    stroke-width: 3.6;
    stroke-linejoin: round;
    stroke-linecap: round;
}
.thread {
    position: relative;
    display: flow-root;
}
.day {
    height: 25.5px;
    margin-right: auto;
    margin-left: auto;
    border-radius: 13px;
    background: #161717;
    font-size: 17px;
    font-weight: 600;
    line-height: 26px;
    text-align: center;
}
.block {
    display: flex;
    flex-direction: column;
    align-items: flex-start;
    gap: 6.6px;
    padding: 0 24px;
}
.block + .block {
    margin-top: 19.2px;
}
.me {
    align-items: flex-end;
}
.bubble {
    position: relative;
    display: flex;
    align-items: flex-end;
    justify-content: space-between;
    min-height: 42px;
    padding: 7px 14px 4px 13px;
    box-sizing: border-box;
    border-radius: 17px;
    background: #232525;
}
.me .bubble {
    padding-right: 12px;
    background: #144d37;
}
.text {
    padding-bottom: 3px;
    font-size: 20.5px;
    line-height: 28px;
    white-space: pre;
}
.text u {
    text-decoration: none;
    border-bottom: 1px solid #6b9482;
}
.meta {
    display: flex;
    align-items: center;
    gap: 4px;
    color: #8d8f8e;
    font-size: 14.2px;
    line-height: 20px;
    letter-spacing: 0.7px;
    white-space: nowrap;
}
.me .meta {
    gap: 3px;
    color: #8fb3a4;
}
.meta svg {
    fill: none;
    stroke: #a4bfb4;
    stroke-width: 1.6;
}
.below {
    flex-direction: column;
    align-items: flex-start;
    min-height: 66.5px;
}
.below .meta {
    align-self: flex-end;
}
/* first line takes the full row, the rest shares its row with the time */
.multi {
    flex-wrap: wrap;
    align-content: flex-start;
    height: 70.2px;
}
.multi .text:first-child {
    width: 100%;
    padding-bottom: 0;
}
.tail {
    position: absolute;
    bottom: 0;
    left: -8px;
    display: none;
    fill: #232525;
}
.me .tail {
    right: -8px;
    left: auto;
    fill: #144d37;
    transform: scaleX(-1);
}
.bubble:last-child .tail {
    display: block;
}
.open .tail {
    visibility: hidden;
}
.down {
    position: absolute;
    right: 13px;
    bottom: 34px;
    display: flex;
    align-items: center;
    justify-content: center;
    width: 45px;
    height: 45px;
    padding: 0;
    border: 0;
    border-radius: 50%;
    background: #242626;
}

.composer {
    height: 109px;
    flex: none;
    background: linear-gradient(100deg, #101010, #111212 45%, #101413);
}
.bar {
    display: flex;
    align-items: center;
    height: 40px;
    padding: 10.5px 0 0 19px;
}
.field {
    display: flex;
    align-items: center;
    justify-content: flex-end;
    width: 354px;
    height: 40px;
    margin-left: 20px;
    padding-right: 15px;
    box-sizing: border-box;
    border-radius: 20px;
    background: #2a2a2a;
}
.camera {
    margin-left: 25px;
}
.mic {
    margin-left: 26px;
}
.home {
    width: 197px;
    height: 7.5px;
    margin: 39.5px 0 0 179px;
    border-radius: 4px;
    background: #fff;
}
</style>
